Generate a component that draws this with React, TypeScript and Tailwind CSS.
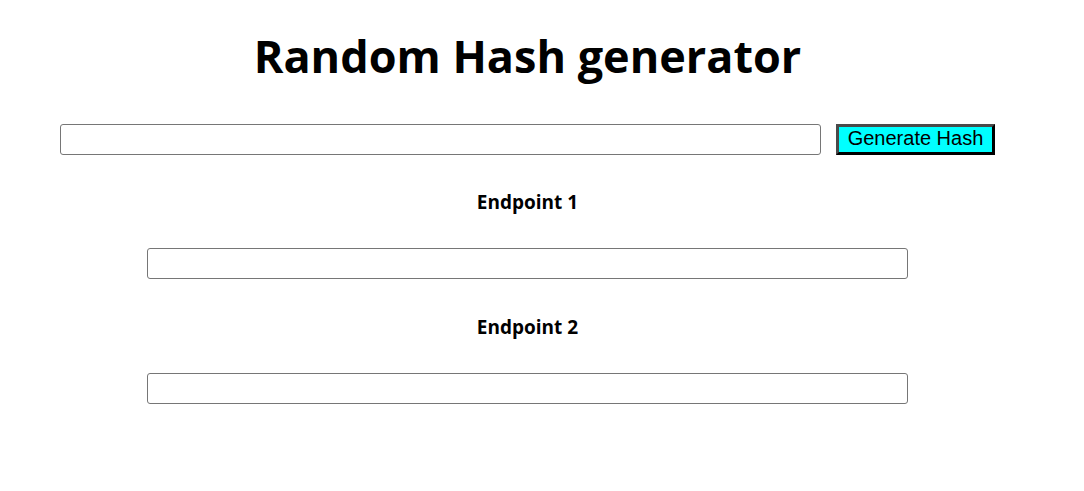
import React from 'react';

function EndpointField({ label }: { label: string }) {
  return (
    <div className="flex flex-col items-center">
      <h3 className="text-[19px] font-bold leading-[24px] text-black">{label}</h3>
      <input
        type="text"
        className="mt-[34px] h-[31px] w-[761px] rounded-[3px] border border-[#767676] bg-white px-1"
      />
    </div>
  );
}

export default function App() {
  return (
    <div className="min-h-screen bg-white" style={{ fontFamily: '"Open Sans", "Noto Sans", sans-serif' }}>
      <div className="flex w-[1055px] flex-col items-center pt-[24px]">
        <h1 className="text-[45px] font-bold leading-[64px] text-black">Random Hash generator</h1>

        <div className="mt-[36px] flex items-center gap-[15px]">
          <input
            type="text"
            className="h-[31px] w-[761px] rounded-[3px] border border-[#767676] bg-white px-1"
          />
          <button
            className="h-[31px] w-[159px] border-[3px] border-t-[#4a4a4a] border-l-[#4a4a4a] border-r-black border-b-black bg-[#00ffff] pb-[3px] text-[20px] leading-none text-black"
            style={{ fontFamily: '"Liberation Sans", Arial, sans-serif' }}
          >
            Generate Hash
          </button>
        </div>

        <div className="mt-[35px] flex flex-col gap-[36px]">
          <EndpointField label="Endpoint 1" />
          <EndpointField label="Endpoint 2" />
        </div>
      </div>
    </div>
  );
}
